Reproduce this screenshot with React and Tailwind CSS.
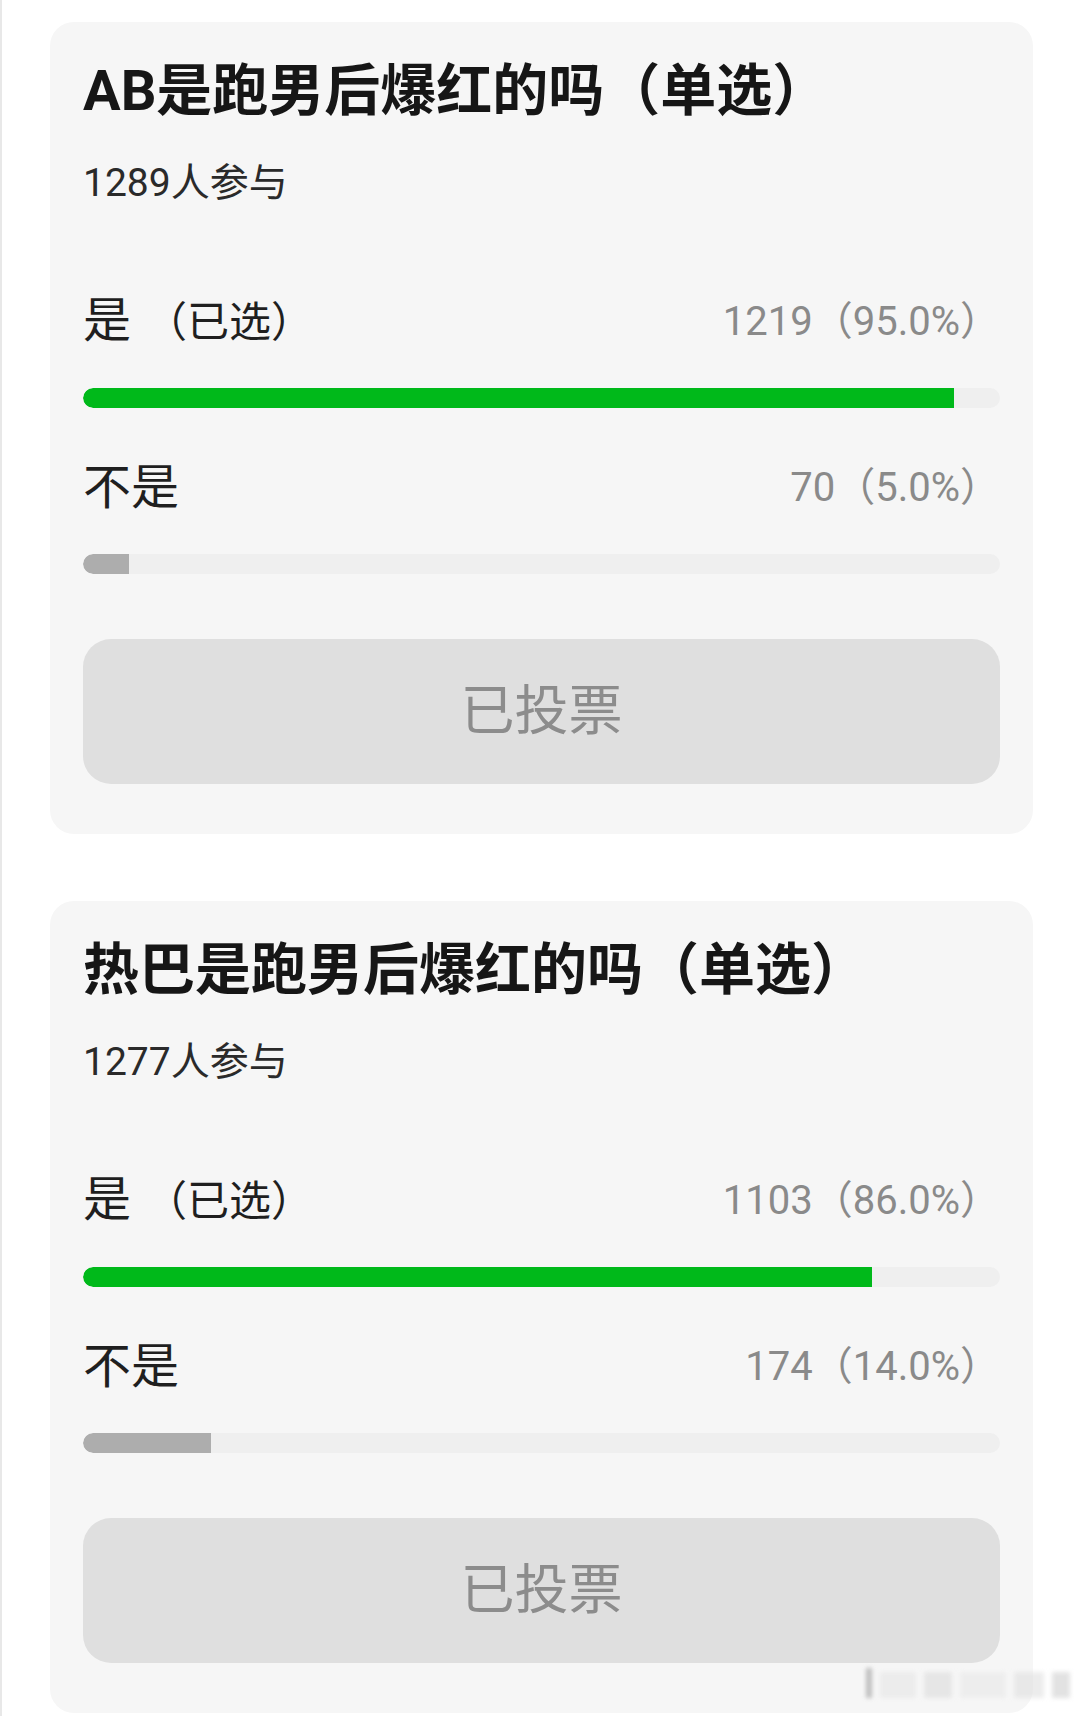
const polls = [
  {
    title: "AB是跑男后爆红的吗（单选）",
    total: "1289人参与",
    options: [
      { label: "是", count: "1219（95.0%）", pct: 95, picked: true },
      { label: "不是", count: "70（5.0%）", pct: 5, picked: false },
    ],
  },
  {
    title: "热巴是跑男后爆红的吗（单选）",
    total: "1277人参与",
    options: [
      { label: "是", count: "1103（86.0%）", pct: 86, picked: true },
      { label: "不是", count: "174（14.0%）", pct: 14, picked: false },
    ],
  },
];

const font = { fontFamily: '"Roboto", "Noto Sans CJK SC", sans-serif' };

function PollOption({ option, first }) {
  return (
    <div className={first ? "mt-[91px]" : "mt-[52px]"}>
      <div className="flex items-center justify-between h-[56px]">
        <span className="flex items-baseline text-[48px] leading-[56px] text-[#1f1f1f]">
          {option.label}
          {option.picked && <span className="ml-[14px] text-[42px]">（已选）</span>}
        </span>
        <span className="text-[40px] leading-[56px] text-[#8a8a8a]">{option.count}</span>
      </div>
      <div className="mt-[38px] h-[20px] w-full rounded-[10px] bg-[#efefef] overflow-hidden">
        <div
          className={`h-full rounded-l-[10px] ${option.picked ? "bg-[#00b91a]" : "bg-[#adadad]"}`}
          style={{ width: option.pct + "%" }}
        />
      </div>
    </div>
  );
}

function PollCard({ poll }) {
  return (
    <div className="w-[983px] rounded-[24px] bg-[#f6f6f6] px-[33px] pt-[40px] pb-[50px]">
      <h2 className="text-[56px] leading-[58px] font-bold text-[#161616] whitespace-nowrap">{poll.title}</h2>
      <p className="mt-[43px] text-[39px] leading-[40px] text-[#2a2a2a]">{poll.total}</p>
      {poll.options.map((option, index) => (
        <PollOption key={index} option={option} first={index === 0} />
      ))}
      <button className="mt-[65px] h-[145px] w-full rounded-[28px] bg-[#dfdfdf] text-[54px] text-[#8c8c8c]" style={font}>
        已投票
      </button>
    </div>
  );
}

export default function App() {
  return (
    <div
      className="relative w-[1080px] h-[1716px] overflow-hidden bg-white border-l-[2px] border-[#e8e8e8] pl-[48px] pt-[22px]"
      style={font}
    >
      <div className="flex flex-col gap-[67px]">
        {polls.map((poll, index) => (
          <PollCard key={index} poll={poll} />
        ))}
      </div>

      {/* blurred watermark in the bottom corner */}
      <div className="absolute right-[10px] bottom-[18px] flex items-end gap-[8px] blur-[2px] opacity-60">
        <div className="h-[30px] w-[6px] bg-[#9a9a9a]" />
        <div className="h-[26px] w-[36px] bg-[#e6e6e6]" />
        <div className="h-[26px] w-[28px] bg-[#dcdcdc]" />
        <div className="h-[26px] w-[46px] bg-[#e8e8e8]" />
        <div className="h-[26px] w-[30px] bg-[#e0e0e0]" />
        <div className="h-[26px] w-[18px] bg-[#d0d0d0]" />
      </div>
    </div>
  );
}
